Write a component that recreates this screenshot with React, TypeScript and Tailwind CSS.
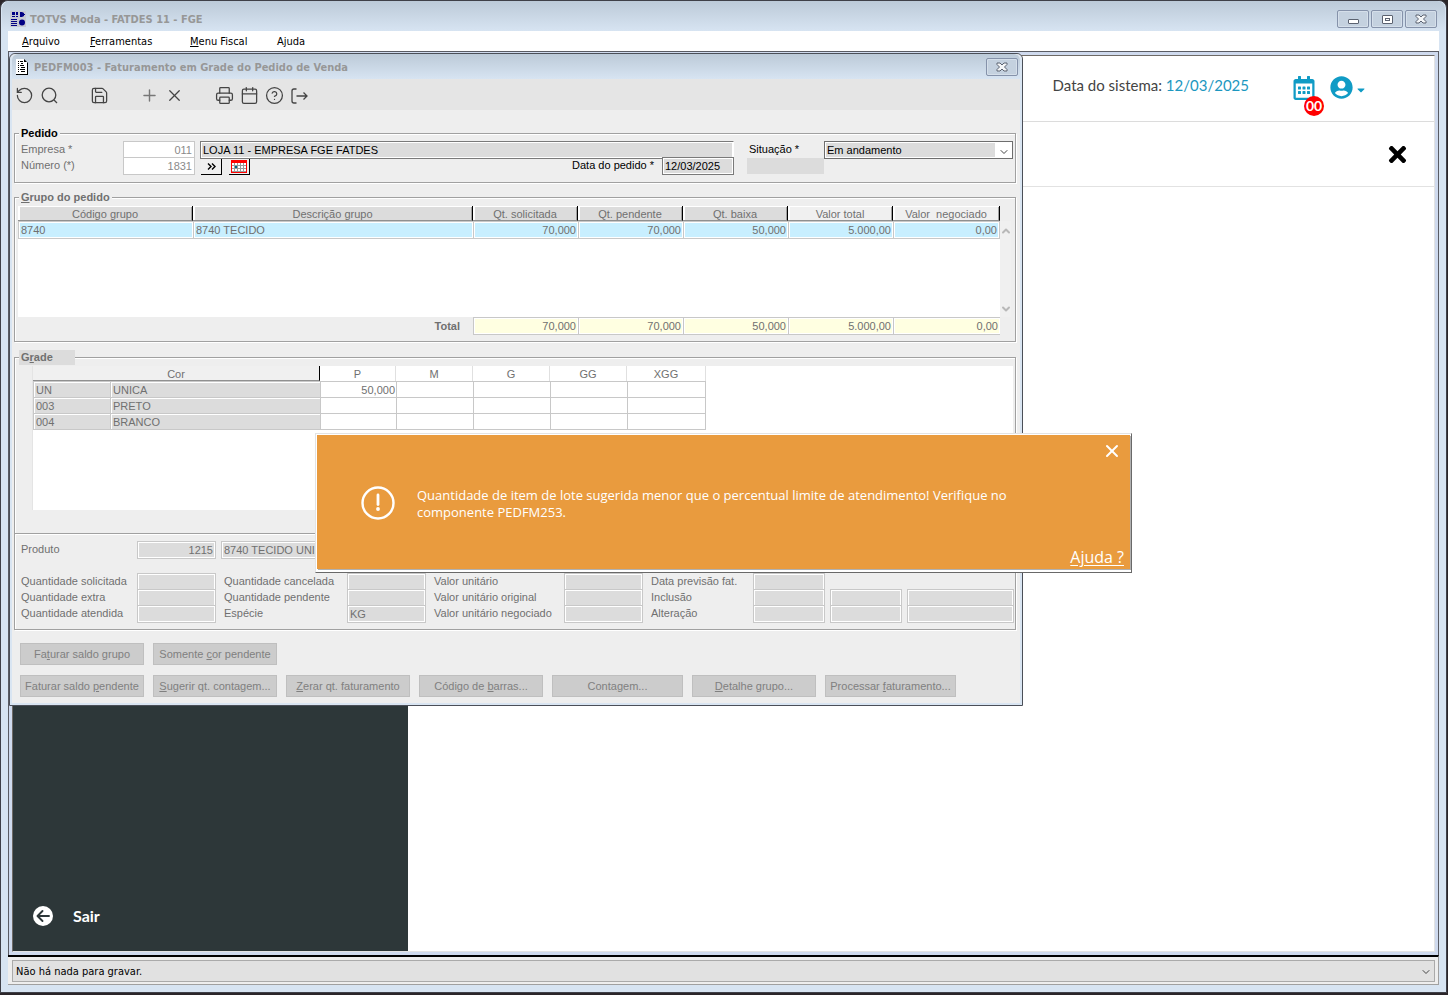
import type { ReactNode } from "react";
import {
  Calendar,
  ChevronDown,
  ChevronUp,
  CircleQuestionMark,
  Plus,
  Printer,
  RotateCcw,
  Save,
  X,
} from "lucide-react";
import { FaCaretDown, FaRegCalendarAlt, FaTimes, FaUserCircle } from "react-icons/fa";

const UI = "font-['DejaVu_Sans_Condensed','DejaVu_Sans',sans-serif]";
const FORM = "font-['Liberation_Sans',Arial,sans-serif]";

function AppLogo() {
  return (
    <svg width="16" height="16" viewBox="0 0 16 16" aria-hidden="true">
      <rect width="16" height="16" fill="#c6c9d2" />
      <g fill="#000084">
        <path d="M2 1h3v3H2zM6 1h2v3H6zM2 5h3v1H2zM6 5h2v1H6zM1 8h6v1H1zM1 10h6v1H1zM1 12h6v1H1zM1 14h6v1H1z" />
        <path d="M10 1h2l2 1v1h1v1h-1v1l-2 1h-2z" />
        <circle cx="12" cy="11.5" r="3" />
      </g>
    </svg>
  );
}

function DocumentIcon() {
  return (
    <svg width="12" height="16" viewBox="0 0 12 16" aria-hidden="true">
      <path d="M0 0h8l4 4v12H0z" fill="#000" />
      <path d="M0 0h8v3h3v12H0z" fill="#fff" />
      <path
        d="M2 2.500h1M4 2.500h3M2 4.500h1M5 4.500h2M2 6.500h1M4 6.500h4M2 8.500h1M5 8.500h4M2 10.500h1M4 10.500h5M2 12.500h1M5 12.500h4"
        stroke="#000"
        strokeWidth="1.2"
      />
    </svg>
  );
}

function CloseGlyph() {
  return (
    <svg width="12" height="10" viewBox="0 0 12 10" aria-hidden="true">
      <path
        d="M1 1h3l2 2 2-2h3v1.500L8.500 5 11 7.500V9H8L6 7 4 9H1V7.500L3.500 5 1 2.500z"
        fill="#f4f6f8"
        stroke="#5b6270"
      />
    </svg>
  );
}

function BackCircle() {
  return (
    <svg width="20" height="20" viewBox="0 0 20 20" aria-hidden="true">
      <circle cx="10" cy="10" r="10" fill="#fff" />
      <path
        d="M16 10H5M9.500 5L4.500 10l5 5"
        fill="none"
        stroke="#2d3739"
        strokeWidth="1.9"
        strokeLinecap="round"
        strokeLinejoin="round"
      />
    </svg>
  );
}

function CaptionButton({ label, size, children }: { label: string; size: string; children: ReactNode }) {
  return (
    <button
      type="button"
      aria-label={label}
      className={`flex items-center justify-center rounded-[2px] border border-[#8592aa] bg-[#c4d1df] shadow-[inset_0_0_0_1px_#d5dfea] ${size}`}
    >
      {children}
    </button>
  );
}

function Tool({ label, children }: { label: string; children: ReactNode }) {
  return (
    <button type="button" aria-label={label} className="flex h-6 w-[25px] items-center justify-center text-[#444]">
      {children}
    </button>
  );
}

function Field({
  id,
  label,
  value = "",
  edge = "border-[#c8c8c8]",
  className = "",
}: {
  id?: string;
  label?: string;
  value?: string;
  edge?: string;
  className?: string;
}) {
  return (
    <input
      id={id}
      aria-label={label}
      readOnly
      value={value}
      className={`block h-[18px] min-w-0 border px-[2px] text-[11px] leading-4 shadow-[inset_0_0_0_1px_#fff] outline-none ${edge} ${className}`}
    />
  );
}

const gray = "bg-[#dcdcdc] text-[#707070]";

function Group({
  title,
  legendClass,
  className = "",
  children,
}: {
  title: ReactNode;
  legendClass: string;
  className?: string;
  children: ReactNode;
}) {
  return (
    <fieldset
      className={`min-w-0 border border-[#a0a0a0] shadow-[1px_1px_0_#fff,inset_1px_1px_0_#fff] ${className}`}
    >
      <legend className={`h-[15px] text-[11px] leading-[15px] font-bold ${legendClass}`}>{title}</legend>
      {children}
    </fieldset>
  );
}

function PedidoGroup() {
  return (
    <Group title="Pedido" legendClass="ml-1 bg-[#eee] px-[2px] text-black" className="h-[57px]">
      <div className="flex h-4 pr-[2px] pl-[6px]">
        <label htmlFor="empresa" className="w-[102px] leading-[17px]">Empresa *</label>
        <Field id="empresa" value="011" className="w-[72px] bg-white text-right text-[#8a8a8a]" />
        <Field
          label="Nome da empresa"
          value="LOJA 11 - EMPRESA FGE FATDES"
          edge="border-[#7a7a7a] border-r-white"
          className="ml-[5px] flex-1 bg-[#dcdcdc] text-black"
        />
        <label htmlFor="situacao" className="ml-[15px] w-[75px] leading-[17px] text-black">Situação *</label>
        <div className="relative h-[18px] w-[189px] border border-[#6e6e6e] bg-white p-px pr-[17px]">
          <select
            id="situacao"
            className="block h-full w-full appearance-none bg-[#dcdcdc] pl-px text-[11px] leading-[14px] text-black outline-none"
          >
            <option>Em andamento</option>
          </select>
          <ChevronDown className="pointer-events-none absolute top-1 right-[2px] size-3 text-[#444]" />
        </div>
      </div>
      <div className="flex h-4 pr-[2px] pl-[6px]">
        <label htmlFor="numero" className="w-[102px] leading-[17px]">Número (*)</label>
        <Field id="numero" value="1831" className="w-[72px] bg-white text-right text-[#8a8a8a]" />
        <button
          type="button"
          aria-label="Avançar"
          className="mt-[2px] ml-[6px] flex h-4 w-[21px] items-center justify-center border-r border-b border-black bg-[#f0f0f0] text-black"
        >
          <svg width="9" height="7" viewBox="0 0 9 7" fill="none" stroke="currentColor" strokeWidth="1.4" aria-hidden="true">
            <path d="M1 .5l3 3-3 3M5 .5l3 3-3 3" />
          </svg>
        </button>
        <button
          type="button"
          aria-label="Calendário"
          className="mt-[2px] ml-[7px] flex h-4 w-[21px] items-center justify-center border-r border-b border-black bg-[#f0f0f0]"
        >
          <svg width="16" height="13" viewBox="0 0 16 13" aria-hidden="true">
            <path d="M0 0h16v13H0z" fill="#f00" />
            <path d="M1 3h14v9H1z" fill="#fff" />
            <path d="M1 5.500h14M1 8.500h14M3.500 3v9M6.500 3v9M9.500 3v9M12.500 3v9M1 11.500h14" stroke="#9a9a9a" />
            <path d="M4 6h2v2H4z" fill="#068" />
          </svg>
        </button>
        <label htmlFor="data" className="mr-2 flex-1 text-right leading-[17px] text-black">Data do pedido *</label>
        <Field id="data" value="12/03/2025" edge="border-[#7a7a7a]" className="w-[72px] bg-[#dcdcdc] text-black" />
        <span className="mt-px mr-[189px] ml-[13px] h-4 w-[77px] bg-[#dcdcdc]" />
      </div>
    </Group>
  );
}

const totals = ["70,000", "70,000", "50,000", "5.000,00", "0,00"];

function GrupoGroup() {
  const heads = [
    "Código grupo",
    "Descrição grupo",
    "Qt. solicitada",
    "Qt. pendente",
    "Qt. baixa",
    "Valor total",
    "Valor \u00a0negociado",
  ];
  return (
    <Group
      title={<><u>G</u>rupo do pedido</>}
      legendClass="ml-1 bg-[#eee] px-[2px]"
      className="mt-[7px] h-[152px]"
    >
      <div className="flex pt-px pr-1 pl-[3px]">
        <table className="w-full flex-1 table-fixed border-separate border-spacing-0">
          <colgroup>
            <col className="w-[175px]" />
            <col />
            <col className="w-[105px]" />
            <col className="w-[105px]" />
            <col className="w-[105px]" />
            <col className="w-[105px]" />
            <col className="w-[107px]" />
          </colgroup>
          <thead>
            <tr>
              {heads.map((h, i) => (
                <th
                  key={h}
                  className={`h-[15px] border-r border-b border-b-[#909090] border-r-black p-0 pt-[2px] text-center leading-3 font-normal shadow-[inset_2px_1px_0_#fff,inset_-1px_0_0_#a0a0a0] ${
                    i > 4 ? "bg-[#f0f0f0]" : "bg-[#dcdcdc]"
                  }`}
                >
                  {h}
                </th>
              ))}
            </tr>
          </thead>
          <tbody>
            <tr>
              {["8740", "8740 TECIDO", ...totals].map((v, i) => (
                <td
                  key={i}
                  className={`h-[18px] border-y border-l border-[#c8c8c8] bg-[#c8efff] p-0 px-[2px] leading-4 shadow-[inset_0_0_0_1px_#fff] last:border-r ${
                    i > 1 ? "text-right" : ""
                  }`}
                >
                  {v}
                </td>
              ))}
            </tr>
            <tr>
              <td colSpan={7} className="h-[78px] bg-white p-0" />
            </tr>
          </tbody>
          <tfoot>
            <tr>
              <th colSpan={2} className="h-[18px] p-0 pr-[13px] text-right leading-4 font-bold">Total</th>
              {totals.map((v, i) => (
                <td
                  key={i}
                  className="h-[18px] border-y border-l border-[#c8c8c8] bg-[#ffffe1] p-0 px-[2px] text-right leading-4 shadow-[inset_0_0_0_1px_#fff]"
                >
                  {v}
                </td>
              ))}
            </tr>
          </tfoot>
        </table>
        <div className="mt-[15px] flex h-24 w-[11px] flex-col items-center justify-between bg-[#f0f0f0] pt-1 pb-[2px] text-[#b8b8b8]">
          <ChevronUp className="size-3" strokeWidth={4} />
          <ChevronDown className="size-3" strokeWidth={4} />
        </div>
      </div>
    </Group>
  );
}

function Cell({ children }: { children?: ReactNode }) {
  return (
    <td className="h-4 border-b border-l border-[#c8c8c8] bg-[#dcdcdc] p-0 px-[2px] pt-[2px] leading-[13px] shadow-[inset_1px_1px_0_#fff]">
      {children}
    </td>
  );
}

function GradeGroup() {
  const colors = [
    ["UN", "UNICA", "50,000"],
    ["003", "PRETO", ""],
    ["004", "BRANCO", ""],
  ];
  const sizes = ["P", "M", "G", "GG", "XGG"];
  const rows = [
    ["Quantidade solicitada", "Quantidade cancelada", "Valor unitário", "Data previsão fat."],
    ["Quantidade extra", "Quantidade pendente", "Valor unitário original", "Inclusão"],
    ["Quantidade atendida", "Espécie", "Valor unitário negociado", "Alteração"],
  ];
  return (
    <Group
      title={<>G<u>r</u>ade</>}
      legendClass="ml-1 w-14 bg-[#dcdcdc] pl-[2px]"
      className="mt-2 h-[280px]"
    >
      <div className="mt-px mr-[2px] ml-[17px] h-36 border-l border-[#e4e4e4] bg-white">
        <table className="w-[673px] table-fixed border-separate border-spacing-0">
          <colgroup>
            <col className="w-[77px]" />
            <col className="w-[210px]" />
            <col className="w-[76px]" />
            <col className="w-[77px]" />
            <col className="w-[77px]" />
            <col className="w-[77px]" />
            <col className="w-[79px]" />
          </colgroup>
          <thead>
            <tr>
              <th
                colSpan={2}
                className="h-[15px] border-r border-b border-r-black border-b-[#909090] bg-[#f0f0f0] p-0 pt-[2px] text-center leading-3 font-normal"
              >
                Cor
              </th>
              {sizes.map((s) => (
                <th
                  key={s}
                  className="h-[15px] border-r border-[#e0e0e0] p-0 pt-[2px] text-center leading-[13px] font-normal"
                >
                  {s}
                </th>
              ))}
            </tr>
            <tr>
              <td colSpan={7} className="h-px bg-[#c8c8c8] p-0" />
            </tr>
          </thead>
          <tbody>
            {colors.map(([code, name, qty]) => (
              <tr key={code}>
                <Cell>{code}</Cell>
                <Cell>{name}</Cell>
                {sizes.map((s) => (
                  <td
                    key={s}
                    className="h-4 border-b border-l border-[#c8c8c8] p-0 px-px pt-[2px] text-right leading-[13px] last:border-r"
                  >
                    {s === "P" ? qty : ""}
                  </td>
                ))}
              </tr>
            ))}
          </tbody>
        </table>
      </div>
      <hr className="mt-[23px] h-[2px] border-t border-b border-t-[#a0a0a0] border-b-white" />
      <div className="mt-[6px] flex h-[18px] pl-[6px]">
        <label htmlFor="produto" className="w-[116px] leading-[17px]">Produto</label>
        <Field id="produto" value="1215" className={`w-[79px] text-right ${gray}`} />
        <Field label="Descrição do produto" value="8740 TECIDO UNICA" className={`ml-[5px] w-[420px] ${gray}`} />
      </div>
      <div className="mt-[14px] pr-px pl-[6px]">
        {rows.map((r, i) => (
          <div
            key={r[0]}
            className="grid h-4 grid-cols-[116px_87px_123px_87px_130px_87px_102px_77px_77px_1fr] leading-[17px]"
          >
            <label htmlFor={`a${i}`}>{r[0]}</label>
            <Field id={`a${i}`} className={`w-[79px] ${gray}`} />
            <label htmlFor={`b${i}`}>{r[1]}</label>
            <Field id={`b${i}`} value={i === 2 ? "KG" : ""} className={`w-[79px] ${gray}`} />
            <label htmlFor={`c${i}`}>{r[2]}</label>
            <Field id={`c${i}`} className={`w-[79px] ${gray}`} />
            <label htmlFor={`d${i}`}>{r[3]}</label>
            <Field id={`d${i}`} className={`w-[72px] ${gray}`} />
            {i > 0 && <Field label={`${r[3]} hora`} className={`w-[72px] ${gray}`} />}
            {i > 0 && <Field label={`${r[3]} usuário`} className={`w-full ${gray}`} />}
          </div>
        ))}
      </div>
    </Group>
  );
}

function Action({ wide, children }: { wide?: boolean; children: ReactNode }) {
  return (
    <button
      type="button"
      className={`h-[22px] border border-[#bfbfbf] bg-[#ccc] text-center leading-5 whitespace-nowrap text-[#808080] ${
        wide ? "w-[131px]" : "w-[124px]"
      }`}
    >
      {children}
    </button>
  );
}

function OrderWindow() {
  return (
    <section
      className={`absolute top-px left-0 w-[1014px] rounded-t-md border border-[#4b4f58] bg-[#eee] text-[11px] text-[#707070] ${FORM}`}
    >
      <div className="rounded-t-md border-x-2 border-b-2 border-[#d9e5f2]">
        <header className="flex h-[25px] items-center rounded-t-md bg-linear-to-b from-[#bccad8] to-[#d7e4f2] pr-[2px] pl-1">
          <DocumentIcon />
          <h2 className={`ml-[6px] flex-1 pt-1 font-bold text-[#979797] ${UI}`}>
            PEDFM003 - Faturamento em Grade do Pedido de Venda
          </h2>
          <CaptionButton label="Fechar janela" size="h-[18px] w-8">
            <CloseGlyph />
          </CaptionButton>
        </header>
        <div className="flex h-[31px] items-center gap-[25px] bg-[#e5e5e5] pt-[2px]">
          <div className="flex">
            <Tool label="Desfazer"><RotateCcw size={19} strokeWidth={1.6} /></Tool>
            <Tool label="Pesquisar">
              <svg width="17" height="17" viewBox="0 0 17 17" fill="none" stroke="currentColor" strokeWidth="1.3" aria-hidden="true">
                <circle cx="8" cy="8" r="6.800" />
                <path d="M13 13l3 3" />
              </svg>
            </Tool>
          </div>
          <div className="flex">
            <Tool label="Salvar"><Save size={19} strokeWidth={1.6} /></Tool>
          </div>
          <div className="flex">
            <Tool label="Adicionar"><Plus size={19} strokeWidth={1.8} color="#777" /></Tool>
            <Tool label="Excluir"><X size={19} strokeWidth={1.6} /></Tool>
          </div>
          <div className="flex">
            <Tool label="Imprimir"><Printer size={19} strokeWidth={1.6} /></Tool>
            <Tool label="Calendário"><Calendar size={19} strokeWidth={1.6} /></Tool>
            <Tool label="Ajuda"><CircleQuestionMark size={19} strokeWidth={1.6} /></Tool>
            <Tool label="Sair">
              <svg width="17" height="16" viewBox="0 0 17 16" fill="none" stroke="currentColor" strokeWidth="1.3" aria-hidden="true">
                <path d="M5.500 1H3a2 2 0 0 0-2 2v10a2 2 0 0 0 2 2h2.500M5.500 8H16M12.500 4.500L16 8l-3.500 3.500" />
              </svg>
            </Tool>
          </div>
        </div>
        <div className="pt-4 pr-1 pb-[6px] pl-[2px]">
          <PedidoGroup />
          <GrupoGroup />
          <GradeGroup />
          <div className="mt-[13px] flex gap-[9px] pl-[6px]">
            <Action>Fa<u>t</u>urar saldo grupo</Action>
            <Action>Somente <u>c</u>or pendente</Action>
          </div>
          <div className="mt-[10px] flex gap-[9px] pl-[6px]">
            <Action>Faturar saldo <u>p</u>endente</Action>
            <Action><u>S</u>ugerir qt. contagem...</Action>
            <Action><u>Z</u>erar qt. faturamento</Action>
            <Action>Código de <u>b</u>arras...</Action>
            <Action wide>Conta<u>g</u>em...</Action>
            <Action><u>D</u>etalhe grupo...</Action>
            <Action wide>Processar <u>f</u>aturamento...</Action>
          </div>
        </div>
      </div>
    </section>
  );
}

function AlertBox() {
  return (
    <div
      role="alertdialog"
      aria-label="Aviso"
      className="absolute top-[381px] left-[306px] h-[140px] w-[817px] border border-t-[#e3e3e3] border-r-[#696969] border-b-[#696969] border-l-[#e3e3e3] bg-white font-['Open_Sans','Noto_Sans',sans-serif] text-white"
    >
      <div className="relative m-px flex h-[134px] bg-[#e99b3e] pl-11 shadow-[1px_1px_0_#b0b0b0]">
        <svg className="mt-[51px]" width="34" height="34" viewBox="0 0 34 34" fill="none" stroke="#fff" aria-hidden="true">
          <circle cx="17" cy="17" r="15.500" strokeWidth="2.400" />
          <path d="M17 9v9.500" strokeWidth="2.800" strokeLinecap="round" />
          <circle cx="17" cy="23" r="1.100" strokeWidth="1.600" fill="#fff" />
        </svg>
        <p className="mt-[52px] ml-[22px] w-[592px] text-[13px] leading-[17px]">
          Quantidade de item de lote sugerida menor que o percentual limite de atendimento! Verifique no componente
          PEDFM253.
        </p>
        <button type="button" aria-label="Fechar aviso" className="absolute top-[6px] right-2">
          <X size={20} strokeWidth={2.4} />
        </button>
        <a href="#ajuda" className="absolute right-[6px] bottom-[2px] text-base leading-5 underline underline-offset-2">
          Ajuda ?
        </a>
      </div>
    </div>
  );
}

function Portal() {
  return (
    <div className="flex h-full bg-white font-['Lato',sans-serif]">
      <aside className="flex w-[395px] flex-col justify-end bg-[#2d3739]">
        <a href="#sair" className="mb-[25px] ml-5 flex items-center text-base leading-5 font-bold text-white">
          <BackCircle />
          <span className="ml-5">Sair</span>
        </a>
      </aside>
      <main className="flex-1">
        <header className="flex h-[66px] items-start justify-end border-b border-[#dcdcdc] pr-[67px]">
          <p className="mt-[19px] text-[15px] leading-5 text-[#444]">
            Data do sistema: <span className="text-[#1c97c0]">12/03/2025</span>
          </p>
          <button type="button" aria-label="Agenda" className="relative mt-5 ml-[43px] text-[#109bc5]">
            <FaRegCalendarAlt size={24} />
            <span className="absolute top-5 left-3 flex size-5 items-center justify-center rounded-full bg-[#f00] text-sm leading-5 font-bold text-white">
              00
            </span>
          </button>
          <button type="button" aria-label="Usuário" className="mt-5 ml-[14px] flex items-center text-[#109bc5]">
            <FaUserCircle size={23} />
            <FaCaretDown size={12} className="mt-1 ml-[2px]" />
          </button>
        </header>
        <div className="flex h-[65px] items-center justify-end border-b border-[#e2e2e2] pr-6">
          <button type="button" aria-label="Fechar" className="text-black">
            <FaTimes size={25} />
          </button>
        </div>
      </main>
    </div>
  );
}

export default function App() {
  return (
    <div className="h-screen bg-[#2b2529] pr-px pb-[2px]">
      <div className={`flex h-full flex-col rounded-t-lg border border-[#3f4048] bg-[#d7e4f2] px-[7px] pb-[7px] text-[11px] ${UI}`}>
        <header className="-mx-[6px] flex h-[30px] items-center rounded-t-lg bg-linear-to-b from-[#bccad8] to-[#d7e4f2] px-2 pt-[6px]">
          <AppLogo />
          <h1 className="ml-1 flex-1 pt-[3px] font-bold text-[#979797]">TOTVS Moda - FATDES 11 - FGE</h1>
          <div className="flex gap-[2px]">
            <CaptionButton label="Minimizar" size="h-[18px] w-8">
              <span className="mt-1 h-[5px] w-[11px] rounded-[1px] border border-[#5b6270] bg-white" />
            </CaptionButton>
            <CaptionButton label="Restaurar" size="h-[18px] w-8">
              <span className="flex h-[9px] w-[11px] items-center justify-center rounded-[1px] border border-[#5b6270] bg-white">
                <span className="h-[3px] w-[5px] border border-[#5b6270]" />
              </span>
            </CaptionButton>
            <CaptionButton label="Fechar" size="h-[18px] w-8">
              <CloseGlyph />
            </CaptionButton>
          </div>
        </header>
        <nav className="flex h-5 items-center bg-white pt-[2px] pl-[14px] text-black">
          <a href="#arquivo" className="w-[68px]"><u>A</u>rquivo</a>
          <a href="#ferramentas" className="w-[100px]"><u>F</u>erramentas</a>
          <a href="#fiscal" className="w-[87px]"><u>M</u>enu Fiscal</a>
          <a href="#ajuda-menu">Ajuda</a>
        </nav>
        <div className="relative min-h-0 flex-1 border border-t-[#5a5c64] border-r-[#5a5c64] border-b-0 border-l-[#5a5c64] bg-[#cfdaee] p-[3px]">
          <div className="h-full border border-t-[#6e6a66] border-r-[#e3e3e3] border-b-[#e3e3e3] border-l-[#6e6a66]">
            <Portal />
          </div>
          <OrderWindow />
          <AlertBox />
        </div>
        <footer className="h-[30px] border-t-2 border-r border-b border-t-black border-r-[#a0a0a0] border-b-[#a0a0a0] bg-[#eee] pt-[3px] pr-[3px] pl-1">
          <div className="relative h-[22px] border border-[#aaa] bg-[#e1e1e1]">
            <select
              aria-label="Mensagens"
              className="block h-full w-full appearance-none bg-transparent pt-[2px] pl-[3px] text-[11px] text-black outline-none"
            >
              <option>Não há nada para gravar.</option>
            </select>
            <ChevronDown className="pointer-events-none absolute top-[5px] right-[2px] size-3 text-[#444]" />
          </div>
        </footer>
      </div>
    </div>
  );
}
